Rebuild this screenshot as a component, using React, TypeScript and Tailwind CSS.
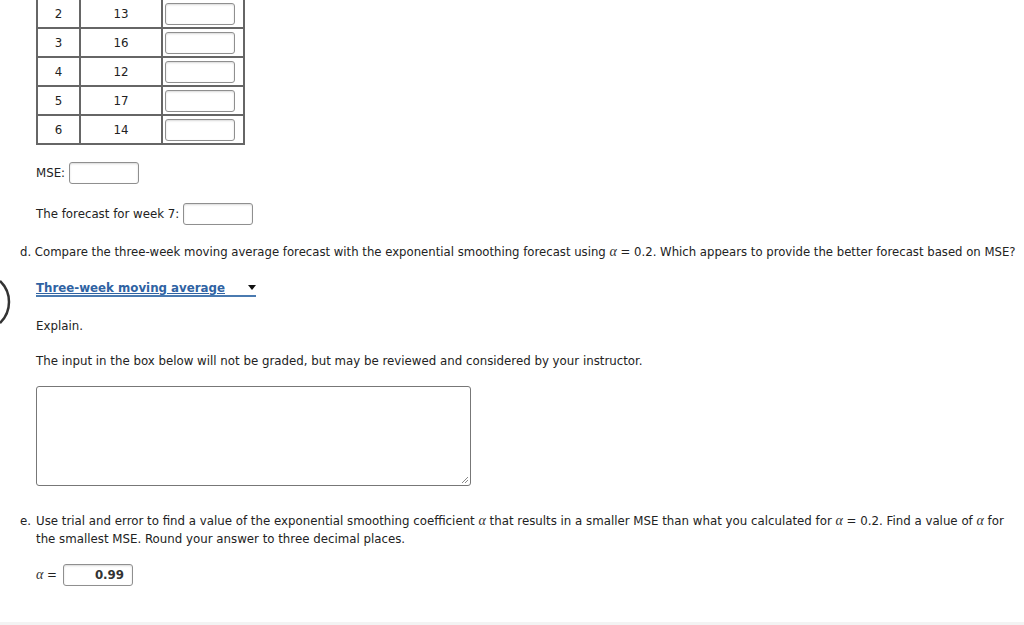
import React from 'react';

const font = { fontFamily: '"DejaVu Sans", Verdana, sans-serif' };

function Box({ w = 'w-[70px]', value = '' }: { w?: string; value?: string }) {
    return (
        <div
            className={`inline-flex h-[22px] ${w} items-center justify-end rounded-[3px] border border-[#8f8f8f] bg-white px-2 align-middle text-[11.8px] font-bold text-[#333] shadow-[inset_0_1px_2px_rgba(0,0,0,0.15)]`}
        >
            {value}
        </div>
    );
}

const Alpha = () => <span className="font-['Liberation_Serif',serif] text-[14px] italic text-[#333]">α</span>;

export default function App() {
    const rows = [
        ['2', '13'],
        ['3', '16'],
        ['4', '12'],
        ['5', '17'],
        ['6', '14'],
    ];

    return (
        <div className="relative h-[625px] overflow-hidden bg-white text-[11.8px] leading-[18px] text-[#222]" style={font}>
            {/* 左侧圆弧 */}
            <svg className="absolute left-0 top-[278px]" width="12" height="50" viewBox="0 0 12 50">
                <path d="M0 3 A 29 29 0 0 1 0 45" fill="none" stroke="#333" strokeWidth="2.5" />
            </svg>

            <div className="pl-[36px]">
                <table className="-mt-[2px] border-collapse">
                    <tbody>
                        {rows.map(([w, v]) => (
                            <tr key={w} className="h-[29px]">
                                <td className="w-[43px] border-2 border-[#666] text-center">{w}</td>
                                <td className="w-[82px] border-2 border-[#666] text-center">{v}</td>
                                <td className="w-[82px] border-2 border-[#666] px-[2px] py-[2px]">
                                    <Box />
                                </td>
                            </tr>
                        ))}
                    </tbody>
                </table>

                <div className="mt-[17px] flex h-[22px] items-center gap-[4px]">
                    <span>MSE:</span>
                    <Box />
                </div>

                <div className="mt-[19px] flex h-[22px] items-center gap-[4px]">
                    <span>The forecast for week 7:</span>
                    <Box />
                </div>
            </div>

            <div className="mt-[18px] whitespace-nowrap pl-[20px] text-[11.7px]">
                d. Compare the three-week moving average forecast with the exponential smoothing forecast using <Alpha /> = 0.2. Which appears to provide the better forecast based on MSE?
            </div>

            <div className="pl-[36px]">
                <div className="mt-[19px] flex h-[17px] w-[220px] items-center justify-between border-b-2 border-[#4a7ab0]">
                    <span className="font-bold text-[#2f63a3] underline">Three-week moving average</span>
                    <svg width="8" height="5" viewBox="0 0 8 5">
                        <path d="M0 0 H8 L4 5 Z" fill="#111" />
                    </svg>
                </div>

                <div className="mt-[20px]">Explain.</div>
                <div className="mt-[17px]">The input in the box below will not be graded, but may be reviewed and considered by your instructor.</div>

                <div className="relative mt-[16px] h-[100px] w-[435px] rounded-[3px] border border-[#777] bg-white">
                    <svg className="absolute bottom-[1px] right-[1px]" width="8" height="8" viewBox="0 0 8 8">
                        <path d="M7 1 L1 7 M7 4 L4 7" stroke="#888" strokeWidth="1" />
                    </svg>
                </div>
            </div>

            <div className="mt-[26px] flex pl-[20px] pr-[12px]">
                <span className="w-[16px] shrink-0">e.</span>
                <span>
                    Use trial and error to find a value of the exponential smoothing coefficient <Alpha /> that results in a smaller MSE than what you calculated for <Alpha /> = 0.2. Find a value of <Alpha /> for the smallest MSE. Round your answer to three decimal places.
                </span>
            </div>

            <div className="mt-[16px] flex h-[22px] items-center gap-[6px] pl-[36px]">
                <span>
                    <Alpha /> =
                </span>
                <Box value="0.99" />
            </div>

            <div className="absolute bottom-0 left-0 h-[3px] w-full bg-[#f3f3f3]" />
        </div>
    );
}
